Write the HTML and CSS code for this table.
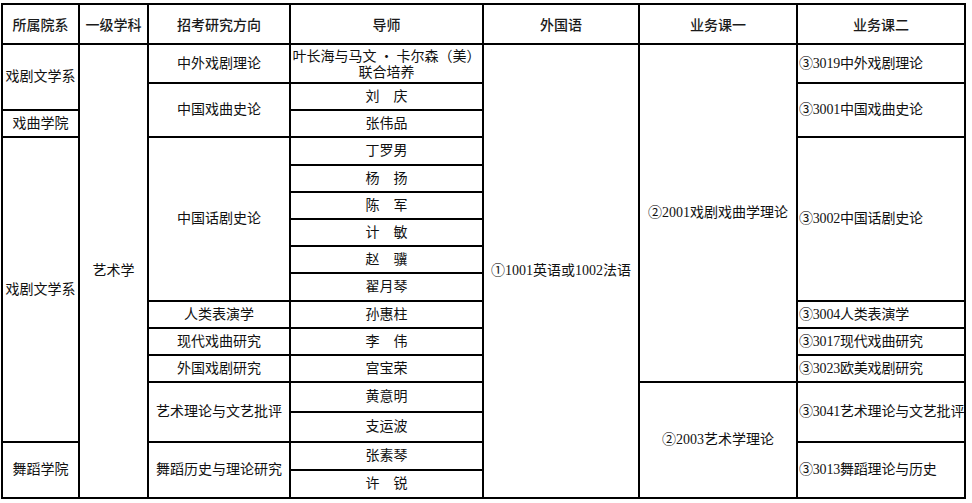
FILE: index.html
```html
<!DOCTYPE html>
<html lang="zh-CN">
<head>
<meta charset="utf-8">
<title>招考研究方向</title>
<link rel="stylesheet" href="styles.css">
</head>
<body>
<table class="plan">
  <colgroup>
    <col class="c1"><col class="c2"><col class="c3"><col class="c4"><col class="c5"><col class="c6"><col class="c7">
  </colgroup>
  <thead>
    <tr class="h40">
      <th>所属院系</th>
      <th>一级学科</th>
      <th>招考研究方向</th>
      <th>导师</th>
      <th>外国语</th>
      <th>业务课一</th>
      <th>业务课二</th>
    </tr>
  </thead>
  <tbody>
    <tr class="h39">
      <td rowspan="2">戏剧文学系</td>
      <td rowspan="16">艺术学</td>
      <td>中外戏剧理论</td>
      <td class="tight">叶长海与马文<span class="dot">·</span>卡尔森（美）<br>联合培养</td>
      <td rowspan="16">①1001英语或1002法语</td>
      <td rowspan="12">②2001戏剧戏曲学理论</td>
      <td class="left">③3019中外戏剧理论</td>
    </tr>
    <tr class="h27">
      <td rowspan="2">中国戏曲史论</td>
      <td>刘　庆</td>
      <td rowspan="2" class="left">③3001中国戏曲史论</td>
    </tr>
    <tr class="h27">
      <td>戏曲学院</td>
      <td>张伟品</td>
    </tr>
    <tr class="h28">
      <td rowspan="11">戏剧文学系</td>
      <td rowspan="6">中国话剧史论</td>
      <td>丁罗男</td>
      <td rowspan="6" class="left">③3002中国话剧史论</td>
    </tr>
    <tr class="h27"><td>杨　扬</td></tr>
    <tr class="h27"><td>陈　军</td></tr>
    <tr class="h27"><td>计　敏</td></tr>
    <tr class="h27"><td>赵　骥</td></tr>
    <tr class="h28"><td>翟月琴</td></tr>
    <tr class="h27">
      <td>人类表演学</td>
      <td>孙惠柱</td>
      <td class="left">③3004人类表演学</td>
    </tr>
    <tr class="h27">
      <td>现代戏曲研究</td>
      <td>李　伟</td>
      <td class="left">③3017现代戏曲研究</td>
    </tr>
    <tr class="h27">
      <td>外国戏剧研究</td>
      <td>宫宝荣</td>
      <td class="left">③3023欧美戏剧研究</td>
    </tr>
    <tr class="h30">
      <td rowspan="2">艺术理论与文艺批评</td>
      <td>黄意明</td>
      <td rowspan="4">②2003艺术学理论</td>
      <td rowspan="2" class="left">③3041艺术理论与文艺批评</td>
    </tr>
    <tr class="h30"><td>支运波</td></tr>
    <tr class="h28">
      <td rowspan="2">舞蹈学院</td>
      <td rowspan="2">舞蹈历史与理论研究</td>
      <td>张素琴</td>
      <td rowspan="2" class="left">③3013舞蹈理论与历史</td>
    </tr>
    <tr class="h28"><td>许　锐</td></tr>
  </tbody>
</table>
</body>
</html>
```

FILE: styles.css
```css
html, body {
  background: #ffffff;
}

body {
  margin: 3px 0 0 1px;
  font-family: "Liberation Serif", "Noto Sans CJK SC", serif;
  font-size: 14px;
  color: #111111;
}

.plan {
  border-collapse: collapse;
  table-layout: fixed;
  width: 965px;
  border: 2px solid #000000;
}

.c1 { width: 77px; }
.c2 { width: 69px; }
.c3 { width: 142px; }
.c4 { width: 193px; }
.c5 { width: 156px; }
.c6 { width: 158px; }
.c7 { width: 168px; }

.plan th,
.plan td {
  border: 2px solid #000000;
  padding: 0;
  text-align: center;
  vertical-align: middle;
  line-height: 16px;
  white-space: nowrap;
  overflow: hidden;
}

.plan th {
  font-family: "Noto Sans CJK SC", sans-serif;
  font-weight: 500;
  color: #1a1a1a;
}

.plan td.left {
  text-align: left;
  padding-left: 1px;
  letter-spacing: -0.2px;
}

.plan td.tight {
  line-height: 16px;
}

.dot {
  font-family: "Noto Sans CJK SC", sans-serif;
  margin: 0 3px;
}

.h40 { height: 40px; }
.h39 { height: 39px; }
.h30 { height: 30px; }
.h28 { height: 28px; }
.h27 { height: 27px; }
```
